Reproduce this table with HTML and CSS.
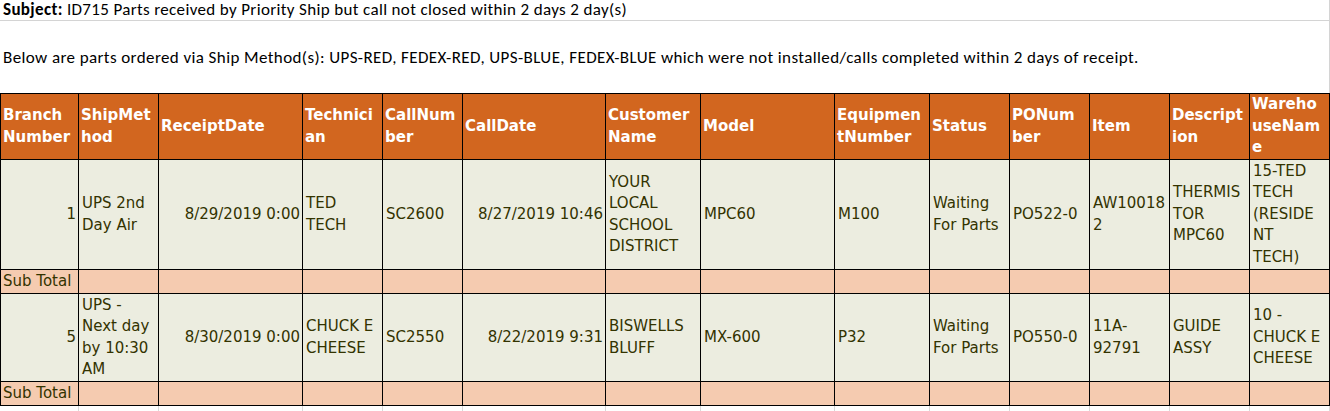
FILE: index.html
```html
<!DOCTYPE html>
<html>
<head>
<meta charset="utf-8">
<link rel="stylesheet" href="styles.css">
</head>
<body>
<div class="sheet">
  <div class="subject"><b>Subject:</b> ID715 Parts received by Priority Ship but call not closed within 2 days 2 day(s)</div>
  <div class="intro">Below are parts ordered via Ship Method(s): UPS-RED, FEDEX-RED, UPS-BLUE, FEDEX-BLUE which were not installed/calls completed within 2 days of receipt.</div>
  <table class="report">
    <colgroup>
      <col class="c78"><col class="c80"><col class="c144"><col class="c80"><col class="c80"><col class="c143"><col class="c95"><col class="c134"><col class="c95"><col class="c80"><col class="c80"><col class="c80"><col class="c80"><col class="c80">
    </colgroup>
    <thead>
      <tr class="head">
        <th>Branch<br>Number</th>
        <th>ShipMet<br>hod</th>
        <th>ReceiptDate</th>
        <th>Technici<br>an</th>
        <th>CallNum<br>ber</th>
        <th>CallDate</th>
        <th>Customer<br>Name</th>
        <th>Model</th>
        <th>Equipmen<br>tNumber</th>
        <th>Status</th>
        <th>PONum<br>ber</th>
        <th>Item</th>
        <th>Descript<br>ion</th>
        <th>Wareho<br>useNam<br>e</th>
      </tr>
    </thead>
    <tbody>
      <tr class="data r1">
        <td class="num">1</td>
        <td>UPS 2nd<br>Day Air</td>
        <td class="num">8/29/2019 0:00</td>
        <td>TED<br>TECH</td>
        <td>SC2600</td>
        <td class="num">8/27/2019 10:46</td>
        <td>YOUR<br>LOCAL<br>SCHOOL<br>DISTRICT</td>
        <td>MPC60</td>
        <td>M100</td>
        <td>Waiting<br>For Parts</td>
        <td>PO522-0</td>
        <td>AW10018<br>2</td>
        <td>THERMIS<br>TOR<br>MPC60</td>
        <td>15-TED<br>TECH<br>(RESIDE<br>NT<br>TECH)</td>
      </tr>
      <tr class="sub">
        <td>Sub Total</td><td></td><td></td><td></td><td></td><td></td><td></td><td></td><td></td><td></td><td></td><td></td><td></td><td></td>
      </tr>
      <tr class="data r2">
        <td class="num">5</td>
        <td>UPS -<br>Next day<br>by 10:30<br>AM</td>
        <td class="num">8/30/2019 0:00</td>
        <td>CHUCK E<br>CHEESE</td>
        <td>SC2550</td>
        <td class="num">8/22/2019 9:31</td>
        <td>BISWELLS<br>BLUFF</td>
        <td>MX-600</td>
        <td>P32</td>
        <td>Waiting<br>For Parts</td>
        <td>PO550-0</td>
        <td>11A-<br>92791</td>
        <td>GUIDE<br>ASSY</td>
        <td>10 -<br>CHUCK E<br>CHEESE</td>
      </tr>
      <tr class="sub">
        <td>Sub Total</td><td></td><td></td><td></td><td></td><td></td><td></td><td></td><td></td><td></td><td></td><td></td><td></td><td></td>
      </tr>
    </tbody>
  </table>
  <div class="grid">
    <span class="c78"></span><span class="c80"></span><span class="c144"></span><span class="c80"></span><span class="c80"></span><span class="c143"></span><span class="c95"></span><span class="c134"></span><span class="c95"></span><span class="c80"></span><span class="c80"></span><span class="c80"></span><span class="c80"></span><span class="c80"></span>
  </div>
</div>
</body>
</html>
```
FILE: styles.css
```css
html, body {
  margin: 0;
  padding: 0;
  background: #ffffff;
  overflow: hidden;
}

.sheet {
  width: 1330px;
  position: relative;
}

.subject {
  height: 21px;
  box-sizing: border-box;
  border-bottom: 1px solid #d4d4d4;
  border-right: 1px solid #d4d4d4;
  padding-left: 3px;
  font-family: "Carlito", "Lato", "Liberation Sans", sans-serif;
  font-size: 17px;
  letter-spacing: 0.35px;
  line-height: 20px;
  color: #000;
  white-space: nowrap;
}

.intro {
  height: 72px;
  box-sizing: border-box;
  border-right: 1px solid #d4d4d4;
  padding-left: 3px;
  padding-top: 1px;
  display: flex;
  align-items: center;
  font-family: "Carlito", "Lato", "Liberation Sans", sans-serif;
  font-size: 17px;
  letter-spacing: 0.4px;
  color: #000;
  white-space: nowrap;
}

.report {
  border-collapse: collapse;
  table-layout: fixed;
  width: 1329px;
  font-family: "DejaVu Sans", Verdana, sans-serif;
  font-size: 15px;
  line-height: 21.5px;
  color: #333300;
}

.c78 { width: 78px; }
.c80 { width: 80px; }
.c95 { width: 95px; }
.c134 { width: 134px; }
.c143 { width: 143px; }
.c144 { width: 144px; }

.report th,
.report td {
  border: 1px solid #000;
  padding: 0 2px 0 3px;
  vertical-align: middle;
  text-align: left;
  white-space: nowrap;
  overflow: hidden;
  box-sizing: border-box;
}

.report th {
  background: #d2661f;
  color: #ffffff;
  font-weight: bold;
  padding-left: 2px;
}

.head th { height: 66px; }

.data td {
  background: #ecede0;
}

.r1 td { height: 110px; }
.r2 td { height: 88px; }

.report td.num {
  text-align: right;
}

.sub td {
  background: #f5cbb0;
  height: 24px;
  padding-left: 2px;
}

.grid {
  display: flex;
  height: 8px;
}

.grid span {
  flex: none;
  box-sizing: border-box;
  border-right: 1px solid #d9d9d9;
}

.grid .c78 { width: 78.5px; }
```
